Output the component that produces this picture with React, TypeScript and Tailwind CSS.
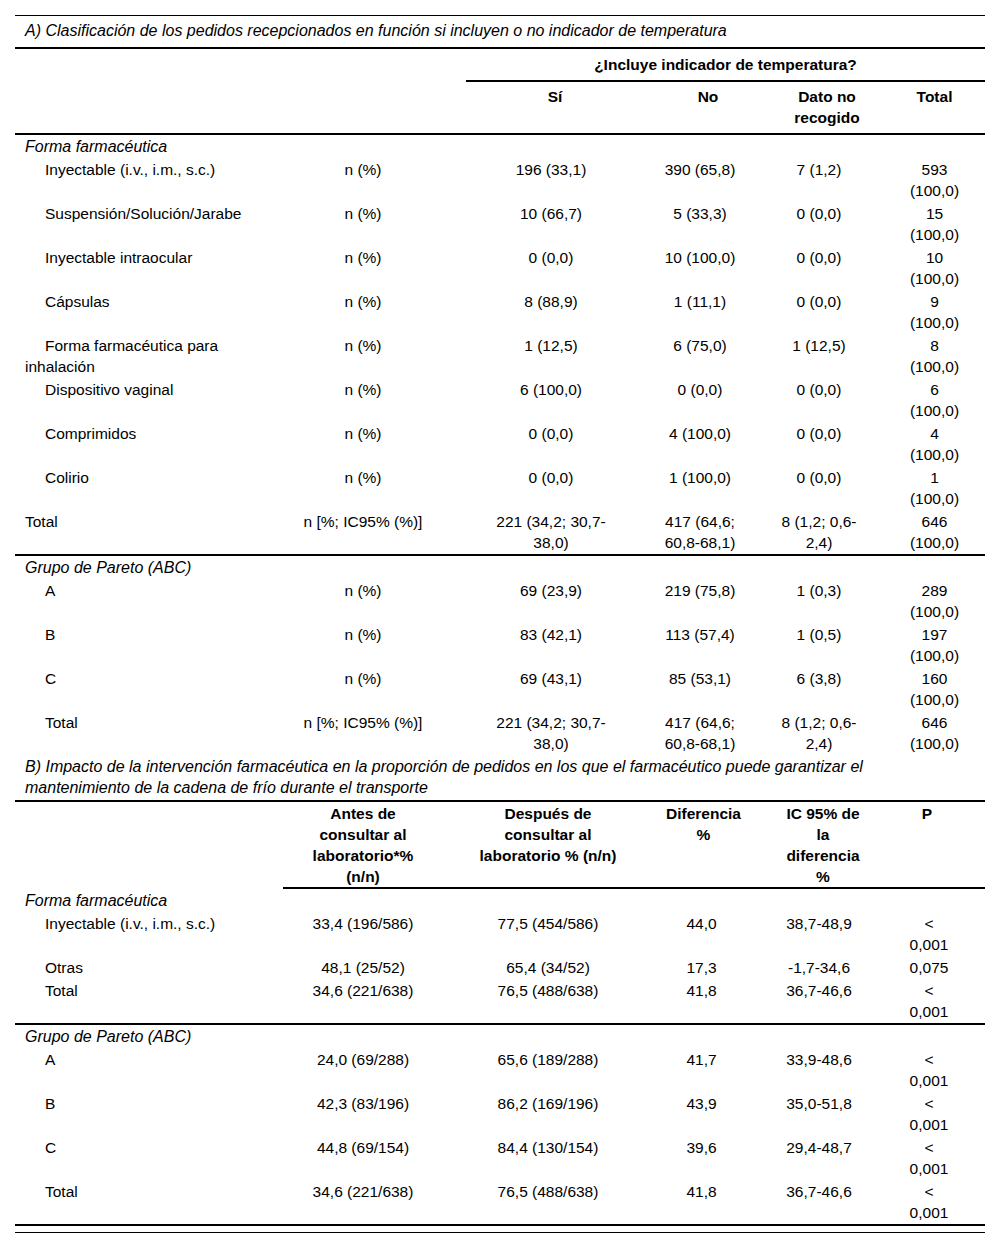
import React from "react";

type RowA = { label: string; indent: boolean; stat: string; si: string; no: string; dato: string; total: string; border?: boolean };
type RowB = { label: string; antes: string; despues: string; dif: string; ic: string; p: string; border?: boolean };

const aCols = ["w-[245px]", "w-[206px]", "w-[170px]", "w-[128px]", "w-[110px]", "w-[111px]"];
const aPad = ["px-[10px]", "px-[15px]", "px-[12px]", "px-[12px]", "pl-[33px] pr-[23px]"];
const aHeadPad = ["px-[10px]", "pl-[19px] pr-[11px]", "pl-[20px] pr-[4px]", "pl-[20px] pr-[4px]", "pl-[33px] pr-[23px]"];

const bCols = ["w-[268px]", "w-[160px]", "w-[210px]", "w-[97px]", "w-[138px]", "w-[97px]"];
const bPad = ["px-[14px]", "px-[28px]", "px-[8px]", "px-[27px]", "pl-[18px] pr-[33px]"];
const bHeadPad = ["px-[14px]", "px-[28px]", "pl-[10px] pr-[6px]", "pl-[31px] pr-[23px]", "pl-[16px] pr-[35px]"];

const formaA: RowA[] = [
  { label: "Inyectable (i.v., i.m., s.c.)", indent: true, stat: "n (%)", si: "196 (33,1)", no: "390 (65,8)", dato: "7 (1,2)", total: "593 (100,0)" },
  { label: "Suspensión/Solución/Jarabe", indent: true, stat: "n (%)", si: "10 (66,7)", no: "5 (33,3)", dato: "0 (0,0)", total: "15 (100,0)" },
  { label: "Inyectable intraocular", indent: true, stat: "n (%)", si: "0 (0,0)", no: "10 (100,0)", dato: "0 (0,0)", total: "10 (100,0)" },
  { label: "Cápsulas", indent: true, stat: "n (%)", si: "8 (88,9)", no: "1 (11,1)", dato: "0 (0,0)", total: "9 (100,0)" },
  { label: "Forma farmacéutica para inhalación", indent: true, stat: "n (%)", si: "1 (12,5)", no: "6 (75,0)", dato: "1 (12,5)", total: "8 (100,0)" },
  { label: "Dispositivo vaginal", indent: true, stat: "n (%)", si: "6 (100,0)", no: "0 (0,0)", dato: "0 (0,0)", total: "6 (100,0)" },
  { label: "Comprimidos", indent: true, stat: "n (%)", si: "0 (0,0)", no: "4 (100,0)", dato: "0 (0,0)", total: "4 (100,0)" },
  { label: "Colirio", indent: true, stat: "n (%)", si: "0 (0,0)", no: "1 (100,0)", dato: "0 (0,0)", total: "1 (100,0)" },
  { label: "Total", indent: false, stat: "n [%; IC95% (%)]", si: "221 (34,2; 30,7-38,0)", no: "417 (64,6; 60,8-68,1)", dato: "8 (1,2; 0,6-2,4)", total: "646 (100,0)", border: true },
];

const paretoA: RowA[] = [
  { label: "A", indent: true, stat: "n (%)", si: "69 (23,9)", no: "219 (75,8)", dato: "1 (0,3)", total: "289 (100,0)" },
  { label: "B", indent: true, stat: "n (%)", si: "83 (42,1)", no: "113 (57,4)", dato: "1 (0,5)", total: "197 (100,0)" },
  { label: "C", indent: true, stat: "n (%)", si: "69 (43,1)", no: "85 (53,1)", dato: "6 (3,8)", total: "160 (100,0)" },
  { label: "Total", indent: true, stat: "n [%; IC95% (%)]", si: "221 (34,2; 30,7-38,0)", no: "417 (64,6; 60,8-68,1)", dato: "8 (1,2; 0,6-2,4)", total: "646 (100,0)" },
];

const formaB: RowB[] = [
  { label: "Inyectable (i.v., i.m., s.c.)", antes: "33,4 (196/586)", despues: "77,5 (454/586)", dif: "44,0", ic: "38,7-48,9", p: "< 0,001" },
  { label: "Otras", antes: "48,1 (25/52)", despues: "65,4 (34/52)", dif: "17,3", ic: "-1,7-34,6", p: "0,075" },
  { label: "Total", antes: "34,6 (221/638)", despues: "76,5 (488/638)", dif: "41,8", ic: "36,7-46,6", p: "< 0,001", border: true },
];

const paretoB: RowB[] = [
  { label: "A", antes: "24,0 (69/288)", despues: "65,6 (189/288)", dif: "41,7", ic: "33,9-48,6", p: "< 0,001" },
  { label: "B", antes: "42,3 (83/196)", despues: "86,2 (169/196)", dif: "43,9", ic: "35,0-51,8", p: "< 0,001" },
  { label: "C", antes: "44,8 (69/154)", despues: "84,4 (130/154)", dif: "39,6", ic: "29,4-48,7", p: "< 0,001" },
  { label: "Total", antes: "34,6 (221/638)", despues: "76,5 (488/638)", dif: "41,8", ic: "36,7-46,6", p: "< 0,001", border: true },
];

function RowATr({ r }: { r: RowA }) {
  const b = r.border ? "border-b-2 border-black" : "";
  const vals = [r.stat, r.si, r.no, r.dato, r.total];
  return (
    <tr>
      <td className={`pl-[10px] pr-[5px] py-px text-left align-top ${r.indent ? "indent-[20px]" : ""} ${b}`}>{r.label}</td>
      {vals.map((v, i) => (
        <td key={i} className={`${aPad[i]} py-px text-center align-top ${b}`}>{v}</td>
      ))}
    </tr>
  );
}

function RowBTr({ r }: { r: RowB }) {
  const b = r.border ? "border-b-2 border-black" : "";
  const vals = [r.antes, r.despues, r.dif, r.ic, r.p];
  return (
    <tr>
      <td className={`pl-[10px] pr-[5px] py-px text-left align-top indent-[20px] ${b}`}>{r.label}</td>
      {vals.map((v, i) => (
        <td key={i} className={`${bPad[i]} py-px text-center align-top ${b}`}>{v}</td>
      ))}
    </tr>
  );
}

function SectionTitle({ text }: { text: string }) {
  return (
    <tr>
      <td colSpan={6} className="pl-[10px] py-px text-left italic text-[16px]">{text}</td>
    </tr>
  );
}

export default function App() {
  return (
    <div className="bg-white min-h-[1248px] pt-[15px] px-[15px] text-black text-[15.5px] leading-[21px] font-['Liberation_Sans',Arial,sans-serif]">
      <div className="w-[970px]">
        <table className="table-fixed w-[970px] border-separate border-spacing-0 border-t border-black">
          <colgroup>
            {aCols.map((c, i) => (
              <col key={i} className={c} />
            ))}
          </colgroup>
          <tbody>
            <tr>
              <td colSpan={6} className="pl-[10px] pt-[4px] pb-[6px] text-left italic text-[16px] border-b-2 border-black">
                A) Clasificación de los pedidos recepcionados en función si incluyen o no indicador de temperatura
              </td>
            </tr>
            <tr>
              <td colSpan={2} className="py-[5px]"></td>
              <td colSpan={4} className="py-[5px] text-center font-bold border-b-2 border-black">
                ¿Incluye indicador de temperatura?
              </td>
            </tr>
            <tr>
              <td className="pt-[4px] pb-[5px] border-b-2 border-black"></td>
              <td className="pt-[4px] pb-[5px] border-b-2 border-black"></td>
              <td className={`${aHeadPad[1]} pt-[4px] pb-[5px] text-center align-top font-bold border-b-2 border-black`}>Sí</td>
              <td className={`${aHeadPad[2]} pt-[4px] pb-[5px] text-center align-top font-bold border-b-2 border-black`}>No</td>
              <td className={`${aHeadPad[3]} pt-[4px] pb-[5px] text-center align-top font-bold border-b-2 border-black`}>Dato no recogido</td>
              <td className={`${aHeadPad[4]} pt-[4px] pb-[5px] text-center align-top font-bold border-b-2 border-black`}>Total</td>
            </tr>
            <SectionTitle text="Forma farmacéutica" />
            {formaA.map((r, i) => (
              <RowATr key={i} r={r} />
            ))}
            <SectionTitle text="Grupo de Pareto (ABC)" />
            {paretoA.map((r, i) => (
              <RowATr key={i} r={r} />
            ))}
          </tbody>
        </table>

        <table className="table-fixed w-[970px] border-separate border-spacing-0">
          <colgroup>
            {bCols.map((c, i) => (
              <col key={i} className={c} />
            ))}
          </colgroup>
          <tbody>
            <tr>
              <td colSpan={6} className="pl-[10px] pr-[110px] pt-px pb-[2px] text-left italic text-[16px] border-b-2 border-black">
                B) Impacto de la intervención farmacéutica en la proporción de pedidos en los que el farmacéutico puede garantizar el mantenimiento de la cadena de frío durante el transporte
              </td>
            </tr>
            <tr>
              <td className="pt-px"></td>
              <td className={`${bHeadPad[0]} pt-px text-center align-top font-bold border-b-2 border-black`}>Antes de consultar al laboratorio*% (n/n)</td>
              <td className={`${bHeadPad[1]} pt-px text-center align-top font-bold border-b-2 border-black`}>Después de consultar al laboratorio % (n/n)</td>
              <td className={`${bHeadPad[2]} pt-px text-center align-top font-bold border-b-2 border-black`}>Diferencia %</td>
              <td className={`${bHeadPad[3]} pt-px text-center align-top font-bold border-b-2 border-black`}>IC 95% de la diferencia %</td>
              <td className={`${bHeadPad[4]} pt-px text-center align-top font-bold border-b-2 border-black`}>P</td>
            </tr>
            <SectionTitle text="Forma farmacéutica" />
            {formaB.map((r, i) => (
              <RowBTr key={i} r={r} />
            ))}
            <SectionTitle text="Grupo de Pareto (ABC)" />
            {paretoB.map((r, i) => (
              <RowBTr key={i} r={r} />
            ))}
          </tbody>
        </table>
        <div className="mt-[6px] h-px bg-black w-[970px]"></div>
      </div>
    </div>
  );
}
